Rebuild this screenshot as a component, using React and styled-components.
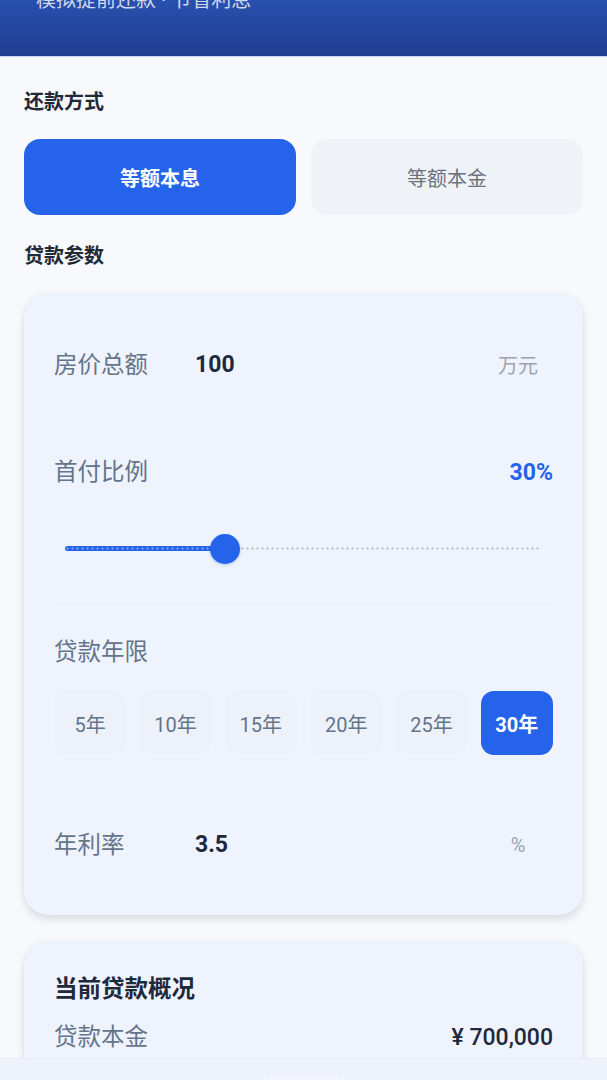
import React, { useState } from "react";
import styled, { createGlobalStyle } from "styled-components";

const GlobalStyle = createGlobalStyle`
  html, body {
    margin: 0;
    padding: 0;
    background: #f7f9fc;
    font-family: Roboto, "Noto Sans CJK SC", "Noto Sans", sans-serif;
    color: #1e293b;
  }
  * { box-sizing: border-box; }
`;

const Page = styled.div`
  min-height: 1080px;
  background: #f7f9fc;
  padding-bottom: 60px;
`;

const Header = styled.header`
  margin-top: -75px;
  padding: 22px 36px 43px;
  background: linear-gradient(180deg, #2d5bbd 0%, #2852b0 55%, #1f3d90 100%);
  border-bottom: 1px solid #c9d6f2;
  color: #fff;
`;

const Title = styled.h1`
  margin: 0 0 4px;
  font-size: 26px;
  line-height: 36px;
  font-weight: 700;
`;

const Subtitle = styled.p`
  margin: 0;
  font-size: 20px;
  line-height: 26px;
  color: rgba(255, 255, 255, 0.78);
`;

const Body = styled.main`
  padding: 0 24px;
`;

const SectionLabel = styled.h2`
  margin: 0;
  padding: ${(p) => p.$pad || "32px 0 24px"};
  font-size: 20px;
  line-height: 26px;
  font-weight: 700;
  color: #1f2937;
`;

const ToggleRow = styled.div`
  display: grid;
  grid-template-columns: 1fr 1fr;
  gap: 15px;
`;

const ToggleButton = styled.button`
  height: 76px;
  border: none;
  border-radius: 16px;
  font-family: inherit;
  font-size: 20px;
  font-weight: ${(p) => (p.$active ? 700 : 400)};
  background: ${(p) => (p.$active ? "#2563eb" : "#eff3f8")};
  color: ${(p) => (p.$active ? "#fff" : "#6b7280")};
  cursor: pointer;
`;

const Card = styled.section`
  background: #eff3fd;
  border-radius: 24px;
  padding: ${(p) => p.$pad || "27px 30px 25px"};
  box-shadow: 0 4px 8px rgba(15, 23, 42, 0.13), 0 0 2px rgba(15, 23, 42, 0.06);
`;

const FieldRow = styled.div`
  display: flex;
  align-items: center;
  height: 90px;
`;

const FieldLabel = styled.span`
  width: 141px;
  flex-shrink: 0;
  font-size: 23.5px;
  line-height: 30px;
  color: #64748b;
`;

const InputBox = styled.div`
  flex: 1;
  display: flex;
  align-items: center;
  justify-content: space-between;
  height: 90px;
  padding: 0 15px 0 0;
  border-bottom: 1px dotted rgba(255, 255, 255, 0.25);
`;

const InputValue = styled.span`
  font-size: 23px;
  font-weight: 700;
  color: #1e293b;
`;

const Unit = styled.span`
  font-size: 20px;
  color: #9ca3af;
  min-width: 40px;
  text-align: center;
`;

const Divider = styled.div`
  height: 1px;
  background: #eaeff9;
`;

const LabelRow = styled.div`
  display: flex;
  justify-content: space-between;
  align-items: center;
  padding: ${(p) => p.$pad || "0"};
`;

const PlainLabel = styled.span`
  font-size: 23.5px;
  line-height: 30px;
  color: #64748b;
`;

const Accent = styled.span`
  font-size: 23px;
  font-weight: 700;
  color: #2563eb;
`;

const SliderWrap = styled.div`
  position: relative;
  height: 30px;
  margin: 47px 13px 40px 11px;
`;

const TrackRest = styled.div`
  position: absolute;
  left: 0;
  right: 0;
  top: 13px;
  height: 3px;
  background-image: radial-gradient(circle, #c4cad6 1px, transparent 1.3px);
  background-size: 5px 3px;
`;

const TrackFill = styled.div`
  position: absolute;
  left: 0;
  top: 12px;
  height: 5px;
  border-radius: 3px;
  background-color: #2563eb;
  background-image: radial-gradient(circle, #7ea2f3 0.9px, transparent 1.2px);
  background-size: 5px 5px;
`;

const Thumb = styled.div`
  position: absolute;
  top: 0;
  width: 30px;
  height: 30px;
  margin-left: -15px;
  border-radius: 50%;
  background: #2563eb;
  box-shadow: 0 1px 3px rgba(37, 99, 235, 0.35);
`;

const ChipRow = styled.div`
  display: grid;
  grid-template-columns: repeat(6, 1fr);
  gap: 13px;
  margin-top: 24px;
  margin-bottom: 45px;
`;

const Chip = styled.button`
  height: 64px;
  border: none;
  border-radius: 13px;
  font-family: inherit;
  font-size: 20px;
  font-weight: ${(p) => (p.$active ? 700 : 400)};
  background: ${(p) => (p.$active ? "#2563eb" : "#edf1f9")};
  color: ${(p) => (p.$active ? "#fff" : "#64748b")};
  padding: 0;
  cursor: pointer;
`;

const Spacer = styled.div`
  height: 26px;
`;

const SummaryTitle = styled.h3`
  margin: 0 0 16px;
  font-size: 23.5px;
  line-height: 30px;
  font-weight: 700;
  color: #1e293b;
`;

const SummaryRow = styled.div`
  display: flex;
  justify-content: space-between;
  align-items: center;
  height: 34px;
`;

const Money = styled.span`
  font-size: 23px;
  font-weight: 500;
  color: #1e293b;
`;

const BottomBar = styled.div`
  position: fixed;
  left: 0;
  right: 0;
  bottom: 0;
  height: 22px;
  background: #eef2fb;
  border-top: 1px solid #e6ebf5;
  display: flex;
  justify-content: center;
  align-items: flex-end;
`;

const BarHandle = styled.div`
  width: 70px;
  height: 5px;
  border-radius: 6px 6px 0 0;
  background: #f3f6fd;
`;

const years = [5, 10, 15, 20, 25, 30];

export default function App() {
  const [mode, setMode] = useState("equal");
  const [term, setTerm] = useState(30);
  const down = 30;
  const pct = (down / 89) * 100;

  return (
    <Page>
      <GlobalStyle />
      <Header>
        <Title>房贷提前还款计算器</Title>
        <Subtitle>模拟提前还款 · 节省利息</Subtitle>
      </Header>
      <Body>
        <SectionLabel>还款方式</SectionLabel>
        <ToggleRow>
          <ToggleButton $active={mode === "equal"} onClick={() => setMode("equal")}>
            等额本息
          </ToggleButton>
          <ToggleButton $active={mode === "principal"} onClick={() => setMode("principal")}>
            等额本金
          </ToggleButton>
        </ToggleRow>
        <SectionLabel $pad="28px 0 24px">贷款参数</SectionLabel>
        <Card>
          <FieldRow>
            <FieldLabel>房价总额</FieldLabel>
            <InputBox>
              <InputValue>100</InputValue>
              <Unit>万元</Unit>
            </InputBox>
          </FieldRow>
          <LabelRow $pad="47px 0 0">
            <PlainLabel>首付比例</PlainLabel>
            <Accent>{down}%</Accent>
          </LabelRow>
          <SliderWrap>
            <TrackRest />
            <TrackFill style={{ width: `${pct}%` }} />
            <Thumb style={{ left: `${pct}%` }} />
          </SliderWrap>
          <Divider />
          <LabelRow $pad="32px 0 0">
            <PlainLabel>贷款年限</PlainLabel>
          </LabelRow>
          <ChipRow>
            {years.map((y) => (
              <Chip key={y} $active={term === y} onClick={() => setTerm(y)}>
                {y}年
              </Chip>
            ))}
          </ChipRow>
          <FieldRow>
            <FieldLabel>年利率</FieldLabel>
            <InputBox>
              <InputValue>3.5</InputValue>
              <Unit>%</Unit>
            </InputBox>
          </FieldRow>
        </Card>
        <Spacer />
        <Card $pad="33px 30px 24px">
          <SummaryTitle>当前贷款概况</SummaryTitle>
          <SummaryRow>
            <PlainLabel>贷款本金</PlainLabel>
            <Money>¥ 700,000</Money>
          </SummaryRow>
        </Card>
      </Body>
      <BottomBar>
        <BarHandle />
      </BottomBar>
    </Page>
  );
}
